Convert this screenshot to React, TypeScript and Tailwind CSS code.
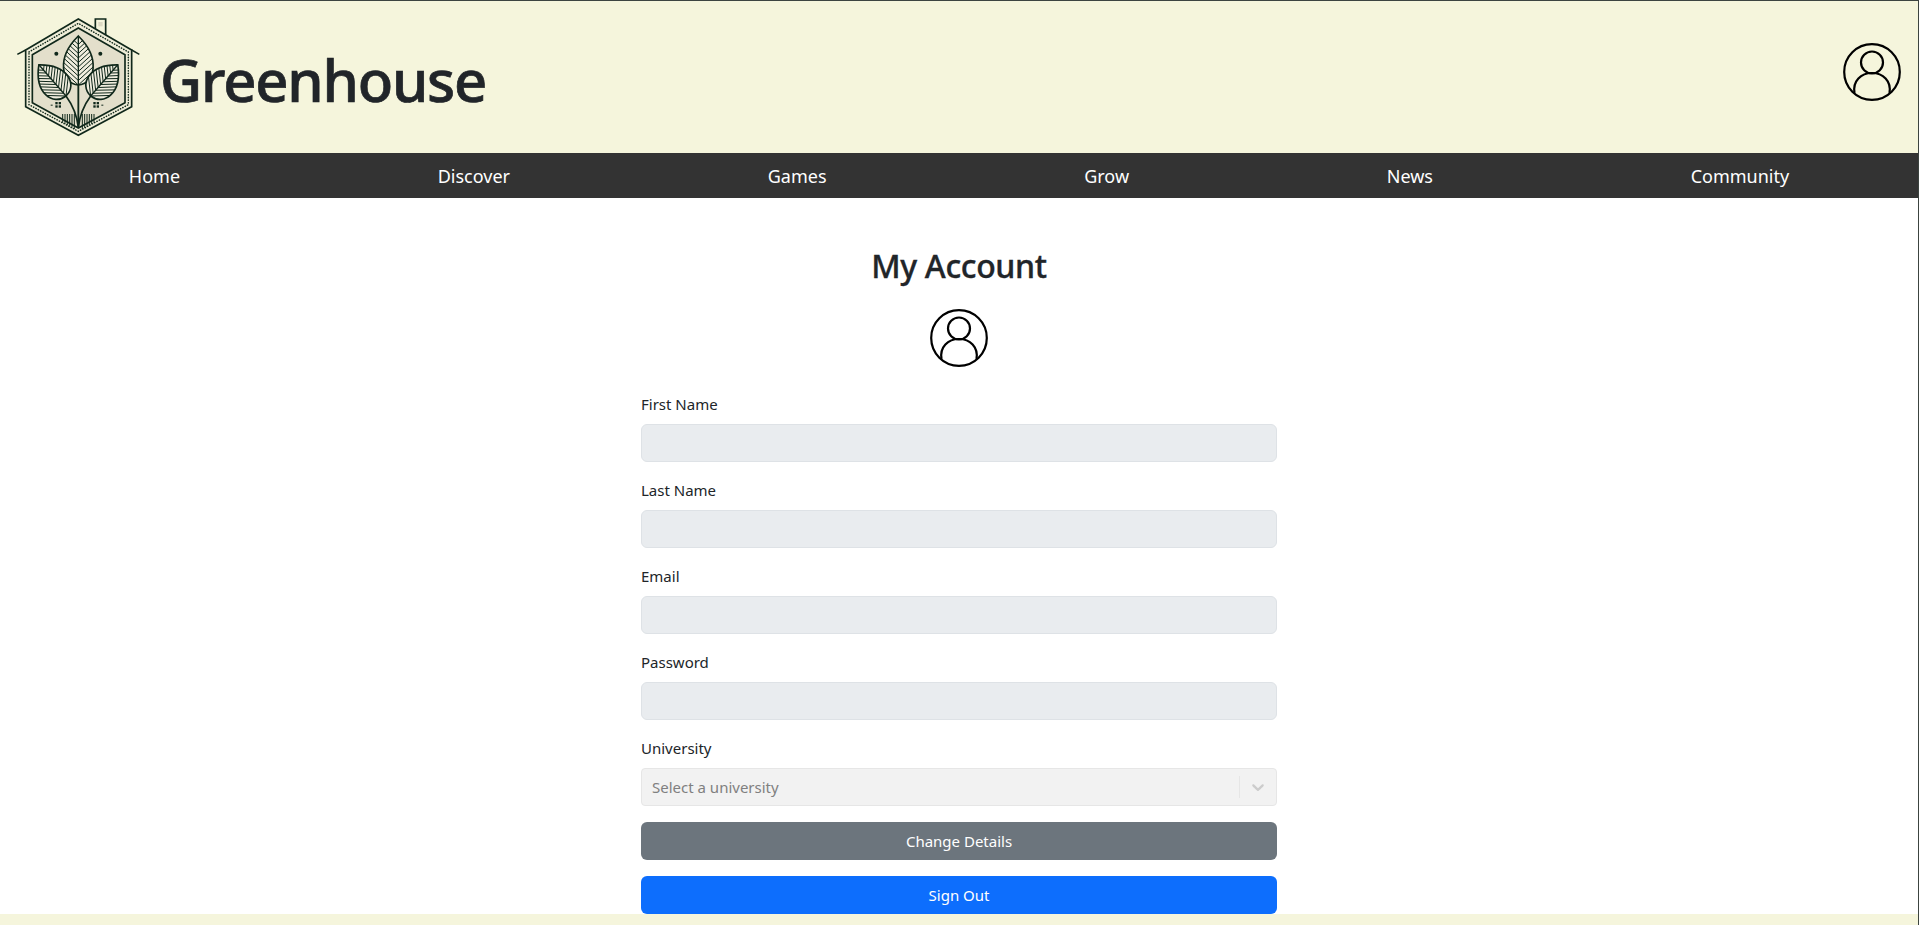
import React from "react";

const INK = "#10281b";

function Leaf({ x, y, angle, len, wid, id }: { x: number; y: number; angle: number; len: number; wid: number; id: string }) {
  const shape = `M0 0 C${len * 0.02} ${-wid * 0.5} ${len * 0.55} ${-wid * 0.68} ${len} 0 C${len * 0.55} ${wid * 0.68} ${len * 0.02} ${wid * 0.5} 0 0 Z`;
  const veins = [];
  const n = 10;
  for (let i = 0; i < n; i++) {
    const t = len * (0.0 + (0.92 * i) / n);
    veins.push(`M${t} 0 L${t + wid * 0.55} ${-wid * 0.6} M${t} 0 L${t + wid * 0.55} ${wid * 0.6}`);
  }
  return (
    <g transform={`translate(${x} ${y}) rotate(${angle})`}>
      <clipPath id={id}>
        <path d={shape} />
      </clipPath>
      <path d={shape} fill="#f0edde" />
      <path d={veins.join(" ")} stroke={INK} strokeWidth="3" clipPath={`url(#${id})`} fill="none" />
      <path d={shape} fill="none" stroke={INK} strokeWidth="5" />
      <path d={`M0 0 L${len} 0`} stroke={INK} strokeWidth="4" />
    </g>
  );
}

function Logo() {
  const hatch: string[] = [];
  for (let i = 0; i < 6; i++) {
    const a = 158 + i * 7;
    hatch.push(`M${a} ${312} L${a} ${338 + i * 3.8}`);
    const b = 252 - i * 7;
    hatch.push(`M${b} ${312} L${b} ${338 + i * 3.8}`);
  }
  return (
    <svg width="140" height="130" viewBox="0 0 420 390" className="shrink-0 self-start mt-[9px]">
      <path d="M256 62 V27 H287 V82" fill="#f5f5dc" stroke={INK} strokeWidth="5" />
      <rect x="265" y="36" width="13" height="13" fill="#dcd9c3" />
      <path d="M47 120 L205 27 L365 120 V290 L205 376 L47 290 Z" fill="#efedd8" stroke={INK} strokeWidth="5" />
      <path d="M57 126 L205 40 L355 126 V284 L205 364 L57 284 Z" fill="none" stroke={INK} strokeWidth="4.5" strokeDasharray="1 7" strokeLinecap="round" />
      <path d="M67 134 L205 54 L345 134 V278 L205 354 L67 278 Z" fill="#e3dfcb" stroke={INK} strokeWidth="5" />
      <path d="M22 133 L47 120 M388 133 L365 120" stroke={INK} strokeWidth="4.5" />
      <path d={hatch.join(" ")} stroke={INK} strokeWidth="3" />
      <path d="M205 225 V352" stroke={INK} strokeWidth="5.5" />
      <path d="M168 258 C190 288 201 318 205 352 C209 318 220 288 242 258" stroke={INK} strokeWidth="5" fill="none" />
      <Leaf x={205} y={225} angle={-90} len={147} wid={100} id="leafTop" />
      <Leaf x={168} y={258} angle={-131} len={124} wid={98} id="leafLeft" />
      <Leaf x={242} y={258} angle={-49} len={124} wid={98} id="leafRight" />
      <circle cx="139" cy="131" r="6" fill={INK} />
      <circle cx="271" cy="131" r="6" fill={INK} />
      <g fill={INK}>
        <rect x="136" y="276" width="7" height="7" />
        <rect x="146" y="276" width="7" height="7" />
        <rect x="136" y="286" width="7" height="7" />
        <rect x="146" y="286" width="7" height="7" />
        <rect x="122" y="284" width="6" height="3" />
        <rect x="250" y="276" width="7" height="7" />
        <rect x="260" y="276" width="7" height="7" />
        <rect x="250" y="286" width="7" height="7" />
        <rect x="260" y="286" width="7" height="7" />
        <rect x="274" y="284" width="6" height="3" />
      </g>
    </svg>
  );
}

function Avatar({ className }: { className?: string }) {
  return (
    <svg width="58" height="58" viewBox="0 0 58 58" fill="none" stroke="#000" strokeWidth="2.2" className={className}>
      <circle cx="29" cy="29" r="27.8" />
      <circle cx="29" cy="19.5" r="11" />
      <path d="M11.5 50 C9.5 38 18 30 29 30 C40 30 48.5 38 46.5 50" />
    </svg>
  );
}

function Field({ label }: { label: string }) {
  return (
    <div className="mb-4">
      <label className="block mb-2 h-6 leading-6 text-[15px] text-[#212529]">{label}</label>
      <div className="h-[38px] rounded-md border border-[#dee2e6] bg-[#e9ecef]" />
    </div>
  );
}

export default function App() {
  const nav = ["Home", "Discover", "Games", "Grow", "News", "Community"];
  return (
    <div
      className="h-[925px] overflow-hidden flex flex-col bg-white border-t border-r border-[#3c4440]"
      style={{ fontFamily: '"Noto Sans", "Open Sans", sans-serif' }}
    >
      <header className="h-[152px] shrink-0 bg-[#f5f5dc] flex items-center justify-between pl-[10px] pr-[17px]">
        <div className="flex items-center h-full">
          <Logo />
          <h1 className="ml-[10px] mt-[5px] text-[58px] font-medium tracking-[-1.2px] [-webkit-text-stroke:0.7px_#212529] text-[#212529] leading-none">Greenhouse</h1>
        </div>
        <Avatar className="self-start mt-[42px]" />
      </header>
      <nav className="h-[45px] shrink-0 bg-[#333333] flex items-center justify-around">
        {nav.map((n) => (
          <a key={n} className="text-white text-[18px] leading-6">
            {n}
          </a>
        ))}
      </nav>
      <main className="flex-1 flex flex-col items-center pt-[49px] min-h-0">
        <h2 className="text-[32px] font-medium tracking-[-0.35px] [-webkit-text-stroke:0.35px_#212529] leading-[38px] text-[#212529] mb-[24px]">My Account</h2>
        <Avatar />
        <form className="w-[636px] mt-[25px]">
          <Field label="First Name" />
          <Field label="Last Name" />
          <Field label="Email" />
          <Field label="Password" />
          <div className="mb-4">
            <label className="block mb-2 h-6 leading-6 text-[15px] text-[#212529]">University</label>
            <div className="h-[38px] rounded-[4px] border border-[#e6e6e6] bg-[#f2f2f2] flex items-center pl-[10px]">
              <span className="flex-1 text-[15px] text-[#808080]">Select a university</span>
              <span className="w-px h-[22px] bg-[#e6e6e6]" />
              <span className="w-[36px] flex justify-center">
                <svg width="20" height="20" viewBox="0 0 20 20" fill="#cccccc">
                  <path d="M4.516 7.548c0.436-0.446 1.043-0.481 1.576 0l3.908 3.747 3.908-3.747c0.533-0.481 1.141-0.446 1.574 0 0.436 0.445 0.408 1.197 0 1.615-0.406 0.418-4.695 4.502-4.695 4.502-0.217 0.223-0.502 0.335-0.787 0.335s-0.57-0.112-0.789-0.335c0 0-4.287-4.084-4.695-4.502s-0.436-1.17 0-1.615z" />
                </svg>
              </span>
            </div>
          </div>
          <button type="button" className="block w-full h-[38px] rounded-md bg-[#6c757d] text-white text-[15px] mb-4">
            Change Details
          </button>
          <button type="button" className="block w-full h-[38px] rounded-md bg-[#0d6efd] text-white text-[15px]">
            Sign Out
          </button>
        </form>
      </main>
      <footer className="h-[11px] shrink-0 bg-[#f5f5dc]" />
    </div>
  );
}
